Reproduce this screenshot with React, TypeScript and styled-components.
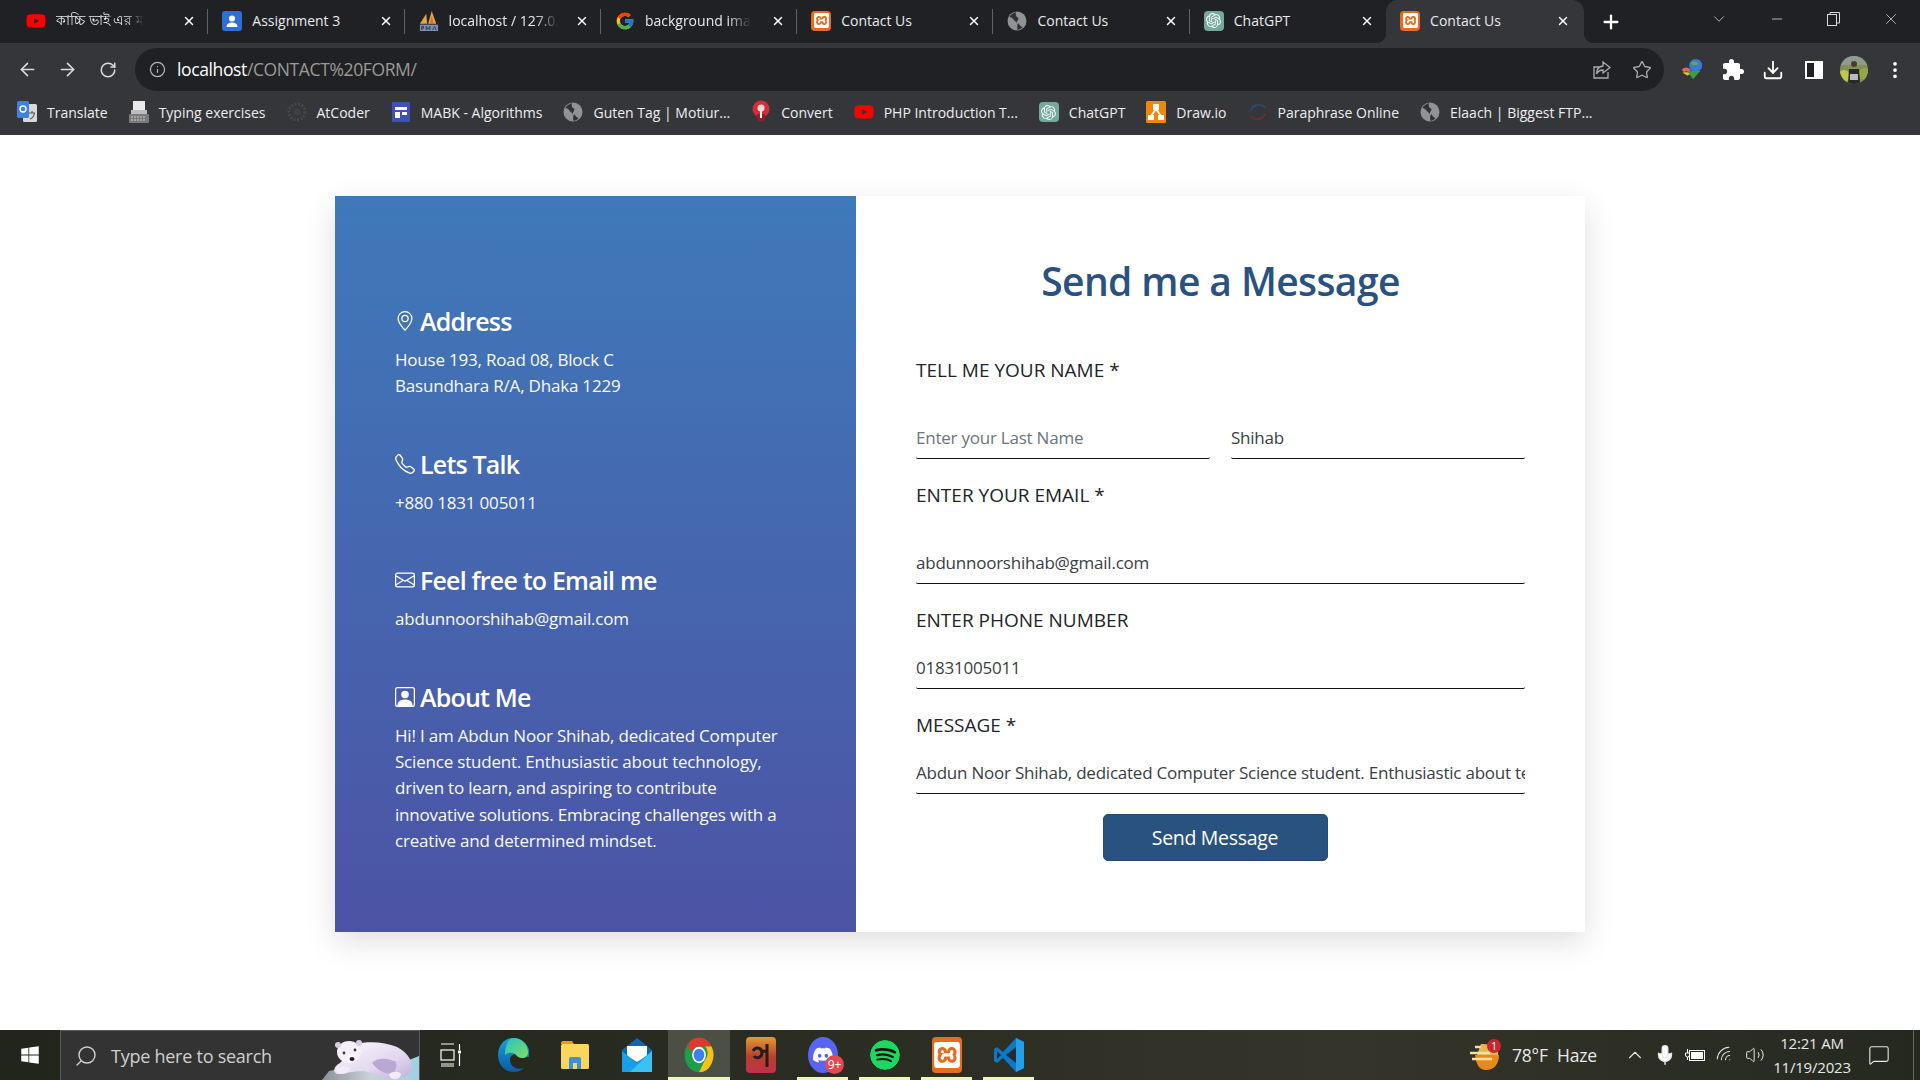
import React from 'react';
import styled, { createGlobalStyle } from 'styled-components';
import { ArrowLeft, ArrowRight, RotateCw, Info, Star, Download, X, Plus, ChevronDown, ChevronUp, Minus, Search, Mic, Wifi, Volume2, MessageSquare } from 'lucide-react';
import { BsGeoAlt, BsTelephone, BsEnvelope, BsPersonSquare, BsThreeDotsVertical } from 'react-icons/bs';
import { FaWindows, FaYoutube } from 'react-icons/fa';
import { FcGoogle } from 'react-icons/fc';
import { MdExtension } from 'react-icons/md';
import { SiDiscord, SiOpenai, SiSpotify, SiXampp } from 'react-icons/si';

const GlobalStyle = createGlobalStyle`
  html, body { margin: 0; padding: 0; background: #fff; }
  * { box-sizing: border-box; }
  body { font-family: "Open Sans", "Noto Sans", sans-serif; overflow: hidden; }
`;

const Screen = styled.div`
  width: 1920px;
  height: 1080px;
  display: flex;
  flex-direction: column;
  overflow: hidden;
`;

/* browser chrome */
const TabStrip = styled.div`
  height: 43px;
  background: #202124;
  display: flex;
  padding-left: 12px;
  flex-shrink: 0;
`;

const Tab = styled.div<{ $active?: boolean; $last?: boolean }>`
  position: relative;
  width: ${p => (p.$active ? '198px' : '196.3px')};
  height: 43px;
  padding: 0 ${p => (p.$active ? '14px' : '12px')} 2px 14px;
  display: flex;
  align-items: center;
  gap: 10px;
  background: ${p => (p.$active ? '#35363a' : 'transparent')};
  border-radius: ${p => (p.$active ? '12px 12px 0 0' : '0')};
  ${p => !p.$active && !p.$last && `
    &::after {
      content: '';
      position: absolute;
      right: 0;
      top: 9px;
      height: 25px;
      width: 1px;
      background: #5f6368;
    }
  `}
  ${p => p.$active && `
    &::before, &::after {
      content: '';
      position: absolute;
      bottom: 0;
      width: 10px;
      height: 10px;
    }
    &::before { left: -10px; background: radial-gradient(circle at 0 0, transparent 10px, #35363a 10.5px); }
    &::after { right: -10px; background: radial-gradient(circle at 100% 0, transparent 10px, #35363a 10.5px); }
  `}
`;

const Favicon = styled.span<{ $bg?: string }>`
  width: 20px;
  height: 20px;
  flex-shrink: 0;
  display: flex;
  align-items: center;
  justify-content: center;
  border-radius: 4px;
  background: ${p => p.$bg || 'transparent'};
  color: #fff;
`;

const TabTitle = styled.span<{ $fade?: boolean }>`
  color: #e8eaed;
  font-size: 14px;
  white-space: nowrap;
  ${p => p.$fade && `
    mask-image: linear-gradient(to right, #000 78%, transparent 100%);
    -webkit-mask-image: linear-gradient(to right, #000 78%, transparent 100%);
  `}
`;

const TabClose = styled.span`
  width: 14px;
  height: 14px;
  margin-left: auto;
  display: flex;
  align-items: center;
  justify-content: center;
  color: #fff;
  flex-shrink: 0;
`;

const NewTab = styled.span`
  width: 24px;
  margin-left: 15px;
  display: flex;
  align-items: center;
  justify-content: center;
  color: #fff;
`;

const WindowControls = styled.div`
  margin-left: auto;
  display: flex;
  align-items: flex-start;
  color: #d8d9da;
`;

const WindowButton = styled.span<{ $w: number }>`
  width: ${p => p.$w}px;
  height: 38px;
  display: flex;
  align-items: center;
  justify-content: center;
`;

const Toolbar = styled.div`
  height: 49px;
  padding-top: 5px;
  background: #35363a;
  display: flex;
  align-items: flex-start;
  flex-shrink: 0;
`;

const NavButton = styled.span`
  width: 40.5px;
  height: 43px;
  display: flex;
  align-items: center;
  justify-content: center;
  color: #dadce0;
  flex-shrink: 0;
`;

const NavGroup = styled.div`
  display: flex;
  padding-left: 7px;
  width: 135px;
  flex-shrink: 0;
`;

const Omnibox = styled.div`
  width: 1529px;
  height: 43px;
  border-radius: 22px;
  background: #202124;
  display: flex;
  align-items: center;
  padding: 0 2px 0 14px;
`;

const UrlText = styled.div`
  margin-left: 11px;
  font-size: 17.5px;
  letter-spacing: -0.38px;
  color: #fff;
  flex: 1;
  padding-bottom: 1px;
`;

const UrlPath = styled.span`
  color: #9c9a96;
`;

const OmniAction = styled.span`
  width: 40px;
  display: flex;
  justify-content: center;
  color: #a9acb0;
`;

const ToolIcons = styled.div`
  display: flex;
  align-items: center;
  height: 43px;
  padding-left: 8px;
`;

const ToolIcon = styled.span`
  width: 40.5px;
  display: flex;
  justify-content: center;
  color: #fff;
`;

const Bookmarks = styled.div`
  height: 43px;
  background: #35363a;
  display: flex;
  align-items: flex-start;
  padding: 2px 0 0 17px;
  gap: 21px;
  flex-shrink: 0;
`;

const Bookmark = styled.div`
  display: flex;
  align-items: center;
  gap: 10px;
  height: 36px;
  color: #eceef0;
  font-size: 14px;
  white-space: nowrap;
`;

/* page */
const Main = styled.main`
  flex: 1;
  background: #fff;
  padding-top: 61px;
  display: flex;
  justify-content: center;
  align-items: flex-start;
`;

const Card = styled.section`
  width: 1250px;
  height: 736px;
  display: flex;
  background: #fff;
  box-shadow: 0 10px 30px rgba(0, 0, 0, 0.13);
`;

const InfoPanel = styled.aside`
  width: 521px;
  padding: 109px 60px 0;
  background: linear-gradient(180deg, #3f79ba 0%, #4c53a5 100%);
  color: #fff;
  display: flex;
  flex-direction: column;
  gap: 48px;
`;

const InfoHeading = styled.h3`
  margin: 0 0 10px;
  height: 32px;
  display: flex;
  align-items: center;
  gap: 5px;
  font-size: 25px;
  font-weight: 600;
  letter-spacing: -0.8px;
  color: #fff;
`;

const InfoIcon = styled.span`
  width: 20px;
  display: flex;
  justify-content: center;
  flex-shrink: 0;
`;

const InfoText = styled.p`
  margin: 0;
  font-size: 17px;
  line-height: 26.4px;
  letter-spacing: -0.2px;
  color: #f8faff;
`;

const FormPanel = styled.form`
  flex: 1;
  padding: 0 60px;
  display: flex;
  flex-direction: column;
`;

const FormTitle = styled.h2`
  margin: 58px 0 49px;
  height: 54px;
  line-height: 54px;
  text-align: center;
  font-size: 39px;
  font-weight: 600;
  letter-spacing: -0.6px;
  color: #2a5280;
`;

const FieldLabel = styled.label<{ $gap: number }>`
  display: block;
  height: 26px;
  line-height: 26px;
  margin-bottom: ${p => p.$gap}px;
  font-size: 19px;
  color: #212529;
`;

const FieldRow = styled.div`
  display: flex;
  gap: 21px;
  margin-bottom: 23px;
`;

const LineInput = styled.input<{ $stack?: boolean }>`
  display: block;
  width: 100%;
  min-width: 0;
  height: 41px;
  padding: 0 0 2px;
  border: 0;
  border-bottom: 1.5px solid #111;
  border-radius: 0 0 2px 2px;
  outline: 0;
  background: transparent;
  font-family: inherit;
  font-size: 17px;
  letter-spacing: -0.23px;
  color: #3a3f44;
  margin-bottom: ${p => (p.$stack ? '23px' : '0')};
  &::placeholder { color: #6c757d; opacity: 1; }
`;

const SubmitRow = styled.div`
  display: flex;
  justify-content: center;
  margin-top: -3px;
  padding-right: 11px;
`;

const SubmitButton = styled.button`
  width: 225px;
  height: 47px;
  border: 1px solid #234a78;
  border-radius: 5px;
  background: #2a5280;
  color: #fff;
  font-family: inherit;
  font-size: 19.5px;
  letter-spacing: -0.3px;
`;

/* taskbar */
const Taskbar = styled.footer`
  height: 50px;
  flex-shrink: 0;
  display: flex;
  background: linear-gradient(90deg, #21251c 0%, #2a2c21 40%, #35342a 70%, #24291f 100%);
  color: #fff;
`;

const StartButton = styled.span`
  width: 60px;
  display: flex;
  align-items: center;
  justify-content: center;
`;

const SearchBox = styled.div`
  position: relative;
  width: 360px;
  display: flex;
  align-items: center;
  padding-left: 13px;
  gap: 13px;
  background: #333;
  border: 1px solid #5a5a5a;
  border-bottom: 0;
  color: #cfcfcf;
  font-size: 18px;
  letter-spacing: -0.25px;
  overflow: hidden;
`;

const BearArt = styled.svg`
  position: absolute;
  right: 0;
  bottom: 0;
`;

const MirroredSearch = styled(Search)`
  transform: scaleX(-1);
`;

const TaskIcons = styled.div`
  display: flex;
`;

const TaskSlot = styled.span<{ $open?: boolean; $current?: boolean }>`
  position: relative;
  width: 62px;
  display: flex;
  align-items: center;
  justify-content: center;
  background: ${p => (p.$current ? '#4b4f44' : 'transparent')};
  ${p => p.$open && `
    &::after {
      content: '';
      position: absolute;
      bottom: 0;
      left: ${p.$current ? '0' : '5px'};
      right: ${p.$current ? '0' : '6px'};
      height: 3px;
      background: #eff6b8;
    }
  `}
`;

const AppTile = styled.span<{ $bg: string }>`
  position: relative;
  width: 30px;
  height: 36px;
  display: flex;
  align-items: center;
  justify-content: center;
  border-radius: 4px;
  background: ${p => p.$bg};
  color: #fff;
`;

const RoundTile = styled(AppTile)`
  border-radius: 50%;
`;

const CountBadge = styled.span`
  position: absolute;
  right: -6px;
  bottom: -1px;
  width: 19px;
  height: 19px;
  border-radius: 50%;
  background: #e5484d;
  color: #fff;
  font-size: 12px;
  line-height: 19px;
  text-align: center;
`;

const SpotifyDisc = styled(SiSpotify)`
  background: #111;
  border-radius: 50%;
`;

const Tray = styled.div`
  margin-left: auto;
  display: flex;
  align-items: center;
  padding-right: 6px;
  color: #e8e8e8;
`;

const WeatherIcon = styled.span`
  position: relative;
  width: 32px;
  height: 32px;
  margin-right: 11px;
  display: flex;
`;

const WeatherBadge = styled.span`
  position: absolute;
  right: 0;
  top: 0;
  width: 14px;
  height: 14px;
  border-radius: 50%;
  background: #c9272b;
  color: #fff;
  font-size: 10px;
  line-height: 14px;
  text-align: center;
`;

const WeatherText = styled.span`
  width: 108px;
  font-size: 17.5px;
  letter-spacing: -0.2px;
  word-spacing: 5px;
  white-space: nowrap;
`;

const TrayIcon = styled.span`
  width: 30px;
  display: flex;
  justify-content: center;
`;

const WifiArc = styled(Wifi)`
  transform: rotate(-45deg);
`;

const Clock = styled.div`
  width: 80px;
  margin-left: 2px;
  text-align: center;
  font-size: 15px;
  line-height: 24px;
  letter-spacing: -0.2px;
  white-space: nowrap;
`;

const NotifyButton = styled.span`
  width: 62px;
  height: 50px;
  padding-right: 8px;
  display: flex;
  justify-content: center;
  align-items: center;
  border-right: 1px solid #6a6a60;
`;

/* drawn icons */
const Globe = () => (
  <svg width="20" height="20" viewBox="0 0 20 20">
    <circle cx="10" cy="10" r="9.5" fill="#8f9296" />
    <path d="M9 1C6 2 3 4 2.5 6c1.5 0 3 1 4 2.5s2.5 2 3 3.5c.3-2 2-3 2-5C10 6 8 5 9 1zM11 12c-1 2-1 4-.5 7 2-.5 4-1.500 5-3-2 0-3-2.500-4.500-4z" fill="#303134" />
  </svg>
);

const AccountIcon = () => (
  <svg width="20" height="20" viewBox="0 0 20 20">
    <rect width="20" height="20" rx="3" fill="#2e6fd6" />
    <circle cx="10" cy="7.500" r="3" fill="#fff" />
    <path d="M4.500 16c0-3 2.500-4.500 5.500-4.500s5.500 1.500 5.500 4.500z" fill="#fff" />
  </svg>
);

const PmaIcon = () => (
  <svg width="22" height="24" viewBox="0 0 22 24">
    <path d="M1 15 8 4l1 11zM10 15 14 1l5 14z" fill="#e7a33c" />
    <path d="M12 15 14 6l2 9z" fill="#c9762c" />
    <rect x="1" y="16" width="20" height="7" fill="#7d8db5" />
    <path d="M3 22v-4h2v2H3M8 22v-4l2 3 2-3v4M15 22l2-4 2 4" stroke="#30364c" fill="none" strokeWidth="1" />
  </svg>
);

const TranslateIcon = () => (
  <svg width="20" height="22" viewBox="0 0 20 22">
    <rect x="6" y="3" width="14" height="18" rx="1.500" fill="#d6dade" />
    <rect width="12" height="17" rx="1.500" fill="#3f7fe6" />
    <circle cx="6" cy="8" r="3" fill="none" stroke="#fff" strokeWidth="1.400" />
    <path d="M12 12h6M15 10v2M13 18c2.500-1 4-3 4.500-6" stroke="#555" fill="none" strokeWidth="1.200" />
  </svg>
);

const TypewriterIcon = () => (
  <svg width="20" height="22" viewBox="0 0 20 22">
    <rect x="4" y="0" width="12" height="10" fill="#e9e9e9" />
    <rect x="2" y="9" width="16" height="4" fill="#bdbdbd" />
    <rect x="0" y="13" width="20" height="9" rx="1" fill="#7a7a7a" />
    <path d="M2 16h15M2 19h15" stroke="#ccc" strokeDasharray="2 1" />
  </svg>
);

const AtCoderIcon = () => (
  <svg width="20" height="20" viewBox="0 0 20 20">
    <circle cx="10" cy="10" r="8" fill="none" stroke="#46484b" strokeWidth="3" strokeDasharray="2 1.500" />
    <circle cx="10" cy="10" r="3.500" fill="#3e4043" />
  </svg>
);

const MabkIcon = () => (
  <svg width="18" height="20" viewBox="0 0 18 20">
    <rect width="18" height="20" fill="#3f51b5" />
    <rect x="3" y="5" width="12" height="3" fill="#fff" />
    <rect x="3" y="10" width="5" height="6" fill="#fff" />
    <rect x="10" y="10" width="5" height="3" fill="#fff" />
  </svg>
);

const ConvertIcon = () => (
  <svg width="20" height="24" viewBox="0 0 20 24">
    <circle cx="10" cy="9" r="8.500" fill="#d32f3a" />
    <path d="M6 14h8v6c0 2-8 2-8 0z" fill="#8e1f28" />
    <circle cx="10" cy="8" r="3.500" fill="#f7d7da" />
    <rect x="9" y="11" width="2" height="7" fill="#eee" />
  </svg>
);

const DrawIoIcon = () => (
  <svg width="20" height="22" viewBox="0 0 20 22">
    <rect width="20" height="22" rx="1.500" fill="#f08705" />
    <path d="M10 8 5 15M10 8l5 7" stroke="#fff" strokeWidth="1.800" />
    <rect x="7" y="3" width="6" height="6" fill="#fff" />
    <rect x="2" y="14" width="6" height="5" fill="#fff" />
    <rect x="12" y="14" width="6" height="5" fill="#fff" />
  </svg>
);

const ParaphraseIcon = () => (
  <svg width="20" height="20" viewBox="0 0 20 20" fill="none" strokeWidth="1.800">
    <path d="M3 9c1-7 11-8 14-3" stroke="#2b4a66" />
    <path d="M17 11c-1 7-11 8-14 3" stroke="#6b2f2f" />
  </svg>
);

const ShareIcon = () => (
  <svg width="20" height="20" viewBox="0 0 20 20" fill="none" stroke="currentColor" strokeWidth="1.300">
    <path d="M16 12v6H2V7h5" />
    <path d="M11 2l7 5.500-7 5.500V10c-3 0-5 1-6.500 4 0-5 2.500-7.500 6.500-8z" />
  </svg>
);

const IdmIcon = () => (
  <svg width="24" height="26" viewBox="0 0 26 26">
    <circle cx="17" cy="8" r="7" fill="#3c78d8" />
    <path d="M12 5c3-2 6-1 8 1-2 2-5 2-7 1z" fill="#6aa84f" />
    <path d="M2 13c3-4 7-3 10 0l-3 2c-2-1-3-1-4 1z" fill="#e06666" />
    <path d="M3 16c3-1 7 0 11 0l-6 3z" fill="#f1c232" />
    <path d="M8 14h14l-8 9z" fill="#38a13c" />
  </svg>
);

const SidePanelIcon = () => (
  <svg width="18" height="18" viewBox="0 0 18 18">
    <rect width="18" height="18" fill="#fff" />
    <rect x="2" y="2" width="7" height="14" fill="#202124" />
  </svg>
);

const Avatar = () => (
  <svg width="28" height="28" viewBox="0 0 28 28">
    <defs>
      <clipPath id="avatarClip"><circle cx="14" cy="14" r="14" /></clipPath>
    </defs>
    <g clipPath="url(#avatarClip)">
      <rect width="28" height="28" fill="#7f9153" />
      <rect width="28" height="9" fill="#8f9c8d" />
      <circle cx="4" cy="20" r="6" fill="#bcc84f" />
      <circle cx="25" cy="18" r="6" fill="#93a845" />
      <circle cx="14" cy="8" r="3" fill="#4e3a2c" />
      <path d="M9 13h10l1 15H8z" fill="#27292b" />
      <rect x="10" y="18" width="8" height="6" fill="#b8bcc0" />
    </g>
  </svg>
);

const RestoreIcon = () => (
  <svg width="13" height="14" viewBox="0 0 13 14" fill="none" stroke="currentColor">
    <rect x="0.500" y="2.500" width="9" height="11" />
    <path d="M3 2.500V0.500h9.500v10.500H10" />
  </svg>
);

const PolarBear = () => (
  <BearArt width="100" height="50" viewBox="0 0 100 50">
    <defs>
      <linearGradient id="bearFur" x1="0" y1="0" x2="1" y2="1">
        <stop offset="0" stopColor="#fbf8fe" />
        <stop offset="0.6" stopColor="#e3d8ef" />
        <stop offset="1" stopColor="#c2b1da" />
      </linearGradient>
      <linearGradient id="ice" x1="0" y1="0" x2="1" y2="0">
        <stop offset="0" stopColor="#8c8f96" />
        <stop offset="0.5" stopColor="#c9d2da" />
        <stop offset="1" stopColor="#9fd0e4" />
      </linearGradient>
    </defs>
    <path d="M3 50 10 41 30 37 90 30 100 26V50z" fill="url(#ice)" />
    <path d="M36 14C50 11 66 12 78 17 90 23 95 33 92 42 88 47 80 49 70 48 60 46 54 43 44 41 34 41 26 44 18 44 13 42 15 36 21 33 26 30 25 20 36 14z" fill="url(#bearFur)" />
    <ellipse cx="30" cy="22" rx="12" ry="11" fill="#f5effa" />
    <circle cx="19" cy="15" r="3" fill="#d8cbe4" />
    <circle cx="40" cy="13" r="3" fill="#d8cbe4" />
    <circle cx="25" cy="23" r="1.400" fill="#4a3030" />
    <circle cx="36" cy="20" r="1.400" fill="#4a3030" />
    <path d="M28 27c1-2 7-3 8-1 0 4-2 6-4 6s-4-2-4-5z" fill="#fbf7fd" />
    <ellipse cx="33" cy="29" rx="2.500" ry="2" fill="#2a1c1c" />
    <path d="M53 33c5-6 17-5 24-1 1 4 0 8-3 12-8 0-15-3-21-11z" fill="#b9a8d4" />
    <path d="M18 38c4-2 9-2 13 0 0 3-3 6-9 6-4 0-6-4-4-6zM70 44c4-3 10-3 12 0 0 3-3 5-7 5-3 0-5-3-5-5z" fill="#f3ecf8" />
  </BearArt>
);

const TaskViewIcon = () => (
  <svg width="22" height="24" viewBox="0 0 22 24" fill="none" stroke="#fff" strokeWidth="1.200">
    <path d="M1 1h13M1 23h13M1 21h13M1 3h0" />
    <rect x="1" y="7" width="13" height="10" />
    <path d="M19.500 1v6M19.500 11v12" />
    <rect x="18" y="7.500" width="3" height="3" fill="#fff" stroke="none" />
  </svg>
);

const EdgeIcon = () => (
  <svg width="32" height="36" viewBox="0 0 32 36">
    <defs>
      <linearGradient id="edgeBlue" x1="0" y1="0" x2="0" y2="1">
        <stop offset="0" stopColor="#1aa0d8" />
        <stop offset="1" stopColor="#0c59a4" />
      </linearGradient>
      <linearGradient id="edgeGreen" x1="0" y1="0" x2="1" y2="1">
        <stop offset="0" stopColor="#2cc0c8" />
        <stop offset="1" stopColor="#7be05e" />
      </linearGradient>
    </defs>
    <path d="M16 1C7 1 1 9 1 18s6 17 15 17c4 0 8-1 11-4-5 2-11 0-13-4-3-6 1-10 5-10 5 0 7 3 12 3s0-20-15-19z" fill="url(#edgeBlue)" />
    <path d="M16 1c9 0 15 7 15 14 0 4-2 6-6 6-3 0-5-2-6-3-3-3-8-3-11 0 0-8 3-17 8-17z" fill="url(#edgeGreen)" />
  </svg>
);

const ExplorerIcon = () => (
  <svg width="30" height="30" viewBox="0 0 30 30">
    <path d="M1 3a2 2 0 0 1 2-2h9l2 3H1z" fill="#e0a112" />
    <rect x="1" y="4" width="28" height="25" rx="1.500" fill="#f9d65c" />
    <path d="M9 29V19a2 2 0 0 1 2-2h8a2 2 0 0 1 2 2v10h-4v-6h-4v6z" fill="#3f8ed8" />
  </svg>
);

const MailIcon = () => (
  <svg width="30" height="34" viewBox="0 0 30 34">
    <path d="M15 0 30 12v22H0V12z" fill="#0f65b5" />
    <path d="M5 8h20v10l-10 6-10-6z" fill="#fff" />
    <path d="M0 13 15 25 30 13v21H0z" fill="#1a9fe6" />
    <path d="M30 13v21H8z" fill="#38c3f2" />
  </svg>
);

const ChromeIcon = () => (
  <svg width="30" height="36" viewBox="0 0 48 48" preserveAspectRatio="none">
    <circle cx="24" cy="24" r="23" fill="#1f9e4a" />
    <path d="M24 1a23 23 0 0 1 20 11.500H24a11.500 11.500 0 0 0-10.500 7L4.500 12A23 23 0 0 1 24 1z" fill="#dc3a2e" />
    <path d="M44 12.500A23 23 0 0 1 24 47l10-17a11.500 11.500 0 0 0 0-17.500z" fill="#fbc117" />
    <circle cx="24" cy="24" r="11" fill="#fff" />
    <circle cx="24" cy="24" r="8.500" fill="#3f80ee" />
  </svg>
);

const AvroIcon = () => (
  <AppTile $bg="linear-gradient(180deg, #e39a33 0%, #b5402f 55%, #c2304a 100%)">
    <svg width="24" height="28" viewBox="0 0 24 28" fill="none" stroke="#2a1c18" strokeWidth="3">
      <path d="M4 10c3-5 9-3 9 2s-6 6-8 3M18 3v23M13 10c3 0 5 0 5 3" />
    </svg>
  </AppTile>
);

const VsCodeIcon = () => (
  <svg width="32" height="36" viewBox="0 0 32 36">
    <path d="M23 1 10 15 4 10 1 12v12l3 2 6-5 13 14 8-4V5z" fill="#0b79c6" />
    <path d="M23 1l8 4v26l-8 4z" fill="#22a0ec" />
    <path d="M23 10 13 18l10 8z" fill="#20242a" fillOpacity="0.9" />
    <path d="M4 14v8l4-4z" fill="#20242a" fillOpacity="0.9" />
  </svg>
);

const WeatherArt = () => (
  <svg width="32" height="32" viewBox="0 0 32 32">
    <path d="M6 16h24c0 9-5 15-13 15C10 31 7 25 6 16z" fill="#e8891c" />
    <path d="M12 5c6 0 12 1 17 6v5H8z" fill="#e8b64e" />
    <path d="M6 8h6M1 14h20M3 20h20" stroke="#efe0a8" strokeWidth="2.400" />
  </svg>
);

const BatteryIcon = () => (
  <svg width="20" height="14" viewBox="0 0 20 14" fill="none" stroke="#fff">
    <rect x="4.500" y="2.500" width="15" height="10" />
    <rect x="6" y="4" width="12" height="7" fill="#fff" stroke="none" />
    <path d="M2.500 1v4M.5 5h4v2a2 2 0 0 1-4 0zM2.500 9v3" strokeWidth="1" />
  </svg>
);

const tabs = [
  { title: 'কাচ্চি ভাই এর ম', icon: <FaYoutube size={20} color="#f00" />, fade: true },
  { title: 'Assignment 3', icon: <AccountIcon /> },
  { title: 'localhost / 127.0.', icon: <PmaIcon />, fade: true },
  { title: 'background ima', icon: <FcGoogle size={20} />, fade: true },
  { title: 'Contact Us', icon: <Favicon $bg="#e66d1f"><SiXampp size={15} /></Favicon> },
  { title: 'Contact Us', icon: <Globe /> },
  { title: 'ChatGPT', icon: <Favicon $bg="#74aa9c"><SiOpenai size={15} /></Favicon> },
];

const bookmarks = [
  { label: 'Translate', icon: <TranslateIcon /> },
  { label: 'Typing exercises', icon: <TypewriterIcon /> },
  { label: 'AtCoder', icon: <AtCoderIcon /> },
  { label: 'MABK - Algorithms', icon: <MabkIcon /> },
  { label: 'Guten Tag | Motiur...', icon: <Globe /> },
  { label: 'Convert', icon: <ConvertIcon /> },
  { label: 'PHP Introduction T...', icon: <FaYoutube size={20} color="#f00" /> },
  { label: 'ChatGPT', icon: <Favicon $bg="#74aa9c"><SiOpenai size={15} /></Favicon> },
  { label: 'Draw.io', icon: <DrawIoIcon /> },
  { label: 'Paraphrase Online', icon: <ParaphraseIcon /> },
  { label: 'Elaach | Biggest FTP...', icon: <Globe /> },
];

export default function App() {
  return (
    <Screen>
      <GlobalStyle />
      <TabStrip>
        {tabs.map((tab, i) => (
          <Tab key={i} $last={i === tabs.length - 1}>
            <Favicon>{tab.icon}</Favicon>
            <TabTitle $fade={tab.fade}>{tab.title}</TabTitle>
            <TabClose><X size={14} strokeWidth={2.5} /></TabClose>
          </Tab>
        ))}
        <Tab $active>
          <Favicon $bg="#e66d1f"><SiXampp size={15} /></Favicon>
          <TabTitle>Contact Us</TabTitle>
          <TabClose><X size={14} strokeWidth={2.5} /></TabClose>
        </Tab>
        <NewTab><Plus size={22} strokeWidth={2.5} /></NewTab>
        <WindowControls>
          <WindowButton $w={58}><ChevronDown size={18} strokeWidth={1} /></WindowButton>
          <WindowButton $w={57}><Minus size={16} strokeWidth={1.2} /></WindowButton>
          <WindowButton $w={57}><RestoreIcon /></WindowButton>
          <WindowButton $w={58}><X size={18} strokeWidth={1} /></WindowButton>
        </WindowControls>
      </TabStrip>

      <Toolbar>
        <NavGroup>
          <NavButton><ArrowLeft size={21} strokeWidth={1.8} /></NavButton>
          <NavButton><ArrowRight size={21} strokeWidth={1.8} /></NavButton>
          <NavButton><RotateCw size={18} strokeWidth={2} /></NavButton>
        </NavGroup>
        <Omnibox>
          <Info size={17} color="#b5b8bb" strokeWidth={1.7} />
          <UrlText>localhost<UrlPath>/CONTACT%20FORM/</UrlPath></UrlText>
          <OmniAction><ShareIcon /></OmniAction>
          <OmniAction><Star size={20} strokeWidth={1.6} /></OmniAction>
        </Omnibox>
        <ToolIcons>
          <ToolIcon><IdmIcon /></ToolIcon>
          <ToolIcon><MdExtension size={24} /></ToolIcon>
          <ToolIcon><Download size={22} strokeWidth={2} /></ToolIcon>
          <ToolIcon><SidePanelIcon /></ToolIcon>
          <ToolIcon><Avatar /></ToolIcon>
          <ToolIcon><BsThreeDotsVertical size={20} /></ToolIcon>
        </ToolIcons>
      </Toolbar>

      <Bookmarks>
        {bookmarks.map(b => (
          <Bookmark key={b.label}>
            <Favicon>{b.icon}</Favicon>
            {b.label}
          </Bookmark>
        ))}
      </Bookmarks>

      <Main>
        <Card>
          <InfoPanel>
            <div>
              <InfoHeading><InfoIcon><BsGeoAlt size={20} /></InfoIcon>Address</InfoHeading>
              <InfoText>House 193, Road 08, Block C<br />Basundhara R/A, Dhaka 1229</InfoText>
            </div>
            <div>
              <InfoHeading><InfoIcon><BsTelephone size={20} /></InfoIcon>Lets Talk</InfoHeading>
              <InfoText>+880 1831 005011</InfoText>
            </div>
            <div>
              <InfoHeading><InfoIcon><BsEnvelope size={20} /></InfoIcon>Feel free to Email me</InfoHeading>
              <InfoText>abdunnoorshihab@gmail.com</InfoText>
            </div>
            <div>
              <InfoHeading><InfoIcon><BsPersonSquare size={20} /></InfoIcon>About Me</InfoHeading>
              <InfoText>
                Hi! I am Abdun Noor Shihab, dedicated Computer Science student. Enthusiastic about technology,
                driven to learn, and aspiring to contribute innovative solutions. Embracing challenges with a
                creative and determined mindset.
              </InfoText>
            </div>
          </InfoPanel>

          <FormPanel onSubmit={e => e.preventDefault()}>
            <FormTitle>Send me a Message</FormTitle>
            <FieldLabel $gap={35}>TELL ME YOUR NAME *</FieldLabel>
            <FieldRow>
              <LineInput readOnly placeholder="Enter your Last Name" />
              <LineInput readOnly value="Shihab" />
            </FieldRow>
            <FieldLabel $gap={35}>ENTER YOUR EMAIL *</FieldLabel>
            <LineInput $stack readOnly value="abdunnoorshihab@gmail.com" />
            <FieldLabel $gap={15}>ENTER PHONE NUMBER</FieldLabel>
            <LineInput $stack readOnly value="01831005011" />
            <FieldLabel $gap={15}>MESSAGE *</FieldLabel>
            <LineInput $stack readOnly value="Abdun Noor Shihab, dedicated Computer Science student. Enthusiastic about technology, driven to learn" />
            <SubmitRow>
              <SubmitButton type="submit">Send Message</SubmitButton>
            </SubmitRow>
          </FormPanel>
        </Card>
      </Main>

      <Taskbar>
        <StartButton><FaWindows size={20} /></StartButton>
        <SearchBox>
          <MirroredSearch size={24} strokeWidth={1.4} />
          Type here to search
          <PolarBear />
        </SearchBox>
        <TaskIcons>
          <TaskSlot><TaskViewIcon /></TaskSlot>
          <TaskSlot><EdgeIcon /></TaskSlot>
          <TaskSlot><ExplorerIcon /></TaskSlot>
          <TaskSlot><MailIcon /></TaskSlot>
          <TaskSlot $open $current><ChromeIcon /></TaskSlot>
          <TaskSlot><AvroIcon /></TaskSlot>
          <TaskSlot $open>
            <RoundTile $bg="#5865f2"><SiDiscord size={20} /><CountBadge>9+</CountBadge></RoundTile>
          </TaskSlot>
          <TaskSlot $open><SpotifyDisc size={30} color="#1ed760" /></TaskSlot>
          <TaskSlot $open><AppTile $bg="#e66d1f"><SiXampp size={26} /></AppTile></TaskSlot>
          <TaskSlot $open><VsCodeIcon /></TaskSlot>
        </TaskIcons>
        <Tray>
          <WeatherIcon><WeatherArt /><WeatherBadge>1</WeatherBadge></WeatherIcon>
          <WeatherText>78°F Haze</WeatherText>
          <TrayIcon><ChevronUp size={22} strokeWidth={1.2} /></TrayIcon>
          <TrayIcon><Mic size={22} strokeWidth={1.6} fill="#fff" /></TrayIcon>
          <TrayIcon><BatteryIcon /></TrayIcon>
          <TrayIcon><WifiArc size={20} strokeWidth={1.2} /></TrayIcon>
          <TrayIcon><Volume2 size={20} strokeWidth={1.2} /></TrayIcon>
          <Clock>12:21 AM<br />11/19/2023</Clock>
          <NotifyButton><MessageSquare size={22} strokeWidth={1.2} /></NotifyButton>
        </Tray>
      </Taskbar>
    </Screen>
  );
}
